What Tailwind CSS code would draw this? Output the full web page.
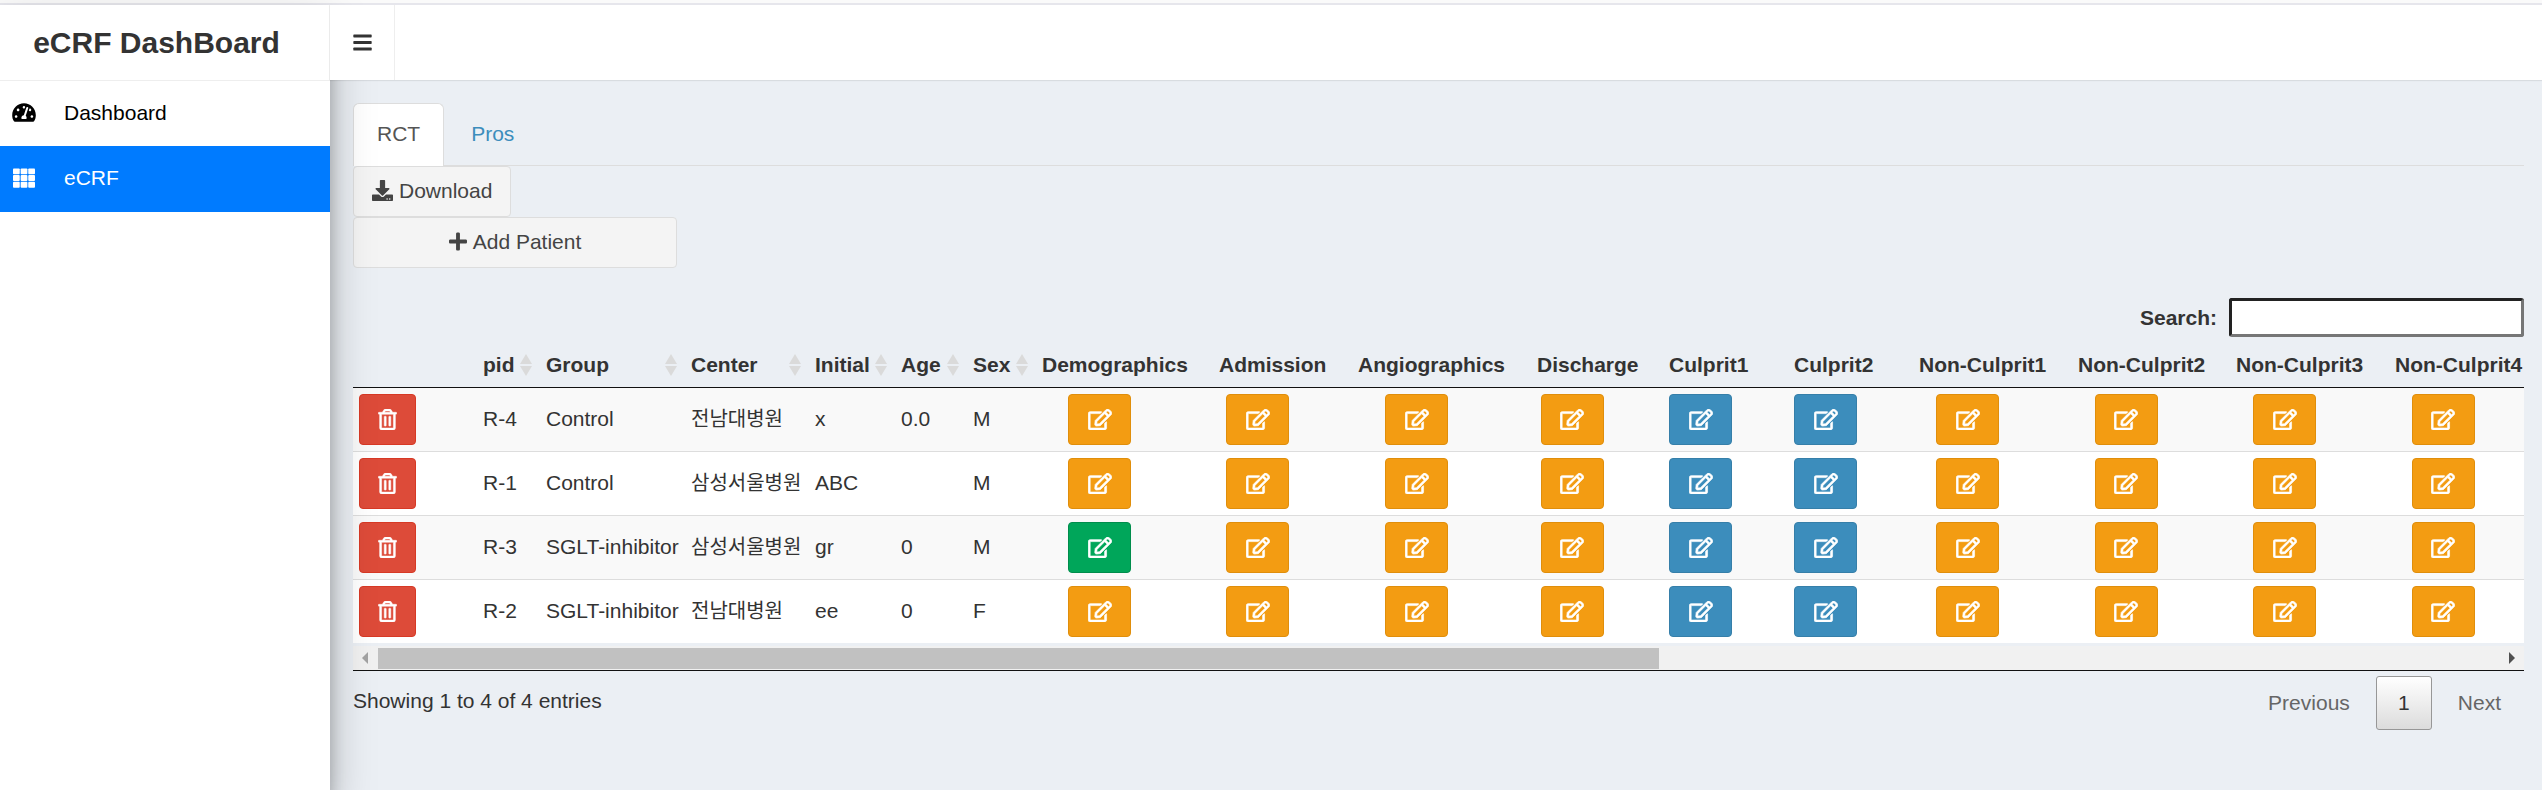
<!DOCTYPE html>
<html lang="en">
<head>
<meta charset="utf-8">
<meta name="viewport" content="width=device-width, initial-scale=1">
<title>eCRF DashBoard</title>
<script src="https://cdn.jsdelivr.net/npm/@tailwindcss/browser@4"></script>
</head>
<body class="flex min-h-screen flex-col overflow-x-hidden bg-[#ebeff4] font-['Liberation_Sans','Noto_Sans_CJK_KR',sans-serif] text-[21px] leading-[30px] text-[#333]">

<svg class="hidden" aria-hidden="true">
  <symbol id="i-gauge" viewBox="0 0 576 512"><path d="M288 32C128.94 32 0 160.94 0 320c0 52.8 14.25 102.26 39.06 144.8 5.61 9.62 16.3 15.2 27.44 15.2h443c11.14 0 21.83-5.58 27.44-15.2C561.75 422.26 576 372.8 576 320c0-159.06-128.94-288-288-288zm0 64c14.71 0 26.58 10.13 30.32 23.65-1.11 2.26-2.64 4.23-3.45 6.67l-9.22 27.67c-5.13 3.49-10.97 6.01-17.64 6.01-17.67 0-32-14.33-32-32S270.33 96 288 96zM96 384c-17.67 0-32-14.33-32-32s14.33-32 32-32 32 14.33 32 32-14.33 32-32 32zm48-160c-17.67 0-32-14.33-32-32s14.33-32 32-32 32 14.33 32 32-14.33 32-32 32zm246.77-72.41l-61.33 184C343.13 347.33 352 364.54 352 384c0 11.72-3.38 22.55-8.88 32H232.88c-5.5-9.45-8.88-20.28-8.88-32 0-33.94 26.5-61.43 59.9-63.59l61.34-184.01c4.17-12.56 17.73-19.45 30.36-15.17 12.57 4.19 19.35 17.79 15.17 30.36zm14.66 57.2l15.52-46.55c3.47-1.29 7.13-2.23 11.05-2.23 17.67 0 32 14.33 32 32s-14.33 32-32 32c-11.38-.01-20.89-6.28-26.57-15.22zM480 384c-17.67 0-32-14.33-32-32s14.33-32 32-32 32 14.33 32 32-14.33 32-32 32z"/></symbol>
  <symbol id="i-grid" viewBox="0 0 512 512"><rect x="0" y="32" width="157" height="134" rx="20"/><rect x="178" y="32" width="157" height="134" rx="20"/><rect x="355" y="32" width="157" height="134" rx="20"/><rect x="0" y="189" width="157" height="134" rx="20"/><rect x="178" y="189" width="157" height="134" rx="20"/><rect x="355" y="189" width="157" height="134" rx="20"/><rect x="0" y="346" width="157" height="134" rx="20"/><rect x="178" y="346" width="157" height="134" rx="20"/><rect x="355" y="346" width="157" height="134" rx="20"/></symbol>
  <symbol id="i-bars" viewBox="0 0 448 512"><rect y="60" width="448" height="72" rx="16"/><rect y="220" width="448" height="72" rx="16"/><rect y="380" width="448" height="72" rx="16"/></symbol>
  <symbol id="i-download" viewBox="0 0 512 512"><path d="M216 0h80c13.3 0 24 10.7 24 24v168h87.7c17.8 0 26.7 21.5 14.1 34.1L269.7 378.3c-7.5 7.5-19.8 7.5-27.3 0L90.1 226.1c-12.6-12.6-3.7-34.1 14.1-34.1H192V24c0-13.3 10.7-24 24-24zm296 376v112c0 13.3-10.7 24-24 24H24c-13.3 0-24-10.7-24-24V376c0-13.3 10.7-24 24-24h146.7l49 49c20.1 20.1 52.5 20.1 72.6 0l49-49H488c13.3 0 24 10.7 24 24zm-124 88c0-11-9-20-20-20s-20 9-20 20 9 20 20 20 20-9 20-20zm64 0c0-11-9-20-20-20s-20 9-20 20 9 20 20 20 20-9 20-20z"/></symbol>
  <symbol id="i-plus" viewBox="0 0 448 512"><path d="M416 208H272V64c0-17.67-14.33-32-32-32h-32c-17.67 0-32 14.33-32 32v144H32c-17.67 0-32 14.33-32 32v32c0 17.67 14.33 32 32 32h144v144c0 17.67 14.33 32 32 32h32c17.67 0 32-14.33 32-32V304h144c17.67 0 32-14.33 32-32v-32c0-17.67-14.33-32-32-32z"/></symbol>
  <symbol id="i-trash" viewBox="0 0 448 512"><path d="M268 416h24a12 12 0 0 0 12-12V188a12 12 0 0 0-12-12h-24a12 12 0 0 0-12 12v216a12 12 0 0 0 12 12zM432 80h-82.41l-34-56.7A48 48 0 0 0 274.41 0H173.59a48 48 0 0 0-41.16 23.3L98.41 80H16A16 16 0 0 0 0 96v16a16 16 0 0 0 16 16h16v336a48 48 0 0 0 48 48h288a48 48 0 0 0 48-48V128h16a16 16 0 0 0 16-16V96a16 16 0 0 0-16-16zM171.84 50.91A6 6 0 0 1 177 48h94a6 6 0 0 1 5.15 2.91L293.61 80H154.39zM368 464H80V128h288zm-212-48h24a12 12 0 0 0 12-12V188a12 12 0 0 0-12-12h-24a12 12 0 0 0-12 12v216a12 12 0 0 0 12 12z"/></symbol>
  <symbol id="i-edit" viewBox="0 0 576 512"><path d="M402.3 344.9l32-32c5-5 13.7-1.5 13.7 5.7V464c0 26.5-21.5 48-48 48H48c-26.5 0-48-21.5-48-48V112c0-26.5 21.5-48 48-48h273.5c7.1 0 10.7 8.6 5.7 13.7l-32 32c-1.5 1.5-3.5 2.3-5.7 2.3H48v352h352V350.5c0-2.1.8-4.1 2.3-5.6zm156.6-201.8L296.3 405.7l-90.4 10c-26.2 2.9-48.5-19.2-45.6-45.6l10-90.4L432.9 17.1c22.9-22.9 59.9-22.9 82.7 0l43.2 43.2c22.9 22.9 22.9 60 .1 82.8zM460.1 174L402 115.9 216.2 301.8l-7.3 65.3 65.3-7.3L460.1 174zm64.8-79.7l-43.2-43.2c-4.1-4.1-10.8-4.1-14.8 0L436 82l58.1 58.1 30.9-30.9c4-4.2 4-10.8-.1-14.9z"/></symbol>
  <symbol id="i-sort" viewBox="0 0 12 24"><path d="M6 1l6 10H0zM6 23l6-10H0z"/></symbol>
</svg>

<div class="h-[5px] border-b-2 border-[#e6e6ec] bg-[#fafafa]"></div>

<div class="flex grow">
  <aside class="relative z-10 flex w-[330px] shrink-0 flex-col bg-white shadow-[0_21px_42px_rgba(0,0,0,0.25),0_15px_15px_rgba(0,0,0,0.22)]">
    <a href="#" class="relative z-30 flex h-[76px] items-center justify-center border-r border-b border-[#eee] bg-white pr-4 text-[30px] font-bold">eCRF DashBoard</a>
    <nav class="flex flex-col text-black">
      <a href="#" class="flex h-[65px] items-center gap-7 pb-0.5 pl-3"><svg class="h-[21px] w-6 fill-current"><use href="#i-gauge"/></svg>Dashboard</a>
      <a href="#" aria-current="page" class="flex h-[66px] items-center gap-7 bg-[#007bff] pb-0.5 pl-3 text-white"><svg class="h-[22px] w-6 fill-current"><use href="#i-grid"/></svg>eCRF</a>
    </nav>
  </aside>

  <div class="flex min-w-0 grow flex-col">
    <header class="relative z-20 flex h-[75px] shrink-0 bg-white shadow-[0_1px_1px_rgba(0,0,0,0.08)]">
      <button type="button" aria-label="Toggle navigation" class="flex w-[65px] items-center justify-center border-r border-[#eee]"><svg class="h-[21px] w-[19px] fill-current"><use href="#i-bars"/></svg></button>
    </header>

    <main class="flex grow flex-col pt-[23px] pr-[18px] pl-[23px]">
      <div role="tablist" class="flex h-[63px] border-b border-[#ddd]">
        <button type="button" role="tab" aria-selected="true" class="-mb-px rounded-t-md border border-b-0 border-[#ddd] bg-white px-[23px] pb-0.5 text-[#555]">RCT</button>
        <button type="button" role="tab" aria-selected="false" class="px-[27px] text-[#3c8dbc]">Pros</button>
      </div>
      <div class="flex flex-col items-start text-[#444]">
        <button type="button" class="flex h-[51px] items-center gap-1.5 rounded border border-[#ddd] bg-[#f4f4f4] px-[18px] pb-0.5"><svg class="size-[21px] fill-current"><use href="#i-download"/></svg>Download</button>
        <button type="button" class="flex h-[51px] w-[324px] items-center justify-center gap-1.5 rounded border border-[#ddd] bg-[#f4f4f4] pb-0.5"><svg class="h-[21px] w-[18px] fill-current"><use href="#i-plus"/></svg>Add Patient</button>
      </div>

      <div class="mt-[30px] flex items-center justify-end gap-3">
        <label for="search" class="font-bold">Search:</label>
        <input id="search" type="search" class="h-[39px] w-[295px] rounded-[3px] border-[3px] border-t-[#222] border-r-[#767676] border-b-[#767676] border-l-[#222] bg-white px-1 outline-none">
      </div>

      <div class="mt-1 overflow-hidden">
        <table class="w-[2194px] table-fixed border-collapse">
          <colgroup>
            <col class="w-[124px]"><col class="w-[63px]"><col class="w-[145px]"><col class="w-[124px]"><col class="w-[86px]"><col class="w-[72px]"><col class="w-[69px]">
            <col class="w-[177px]"><col class="w-[139px]"><col class="w-[179px]"><col class="w-[132px]"><col class="w-[125px]"><col class="w-[125px]">
            <col class="w-[159px]"><col class="w-[158px]"><col class="w-[159px]"><col class="w-[158px]">
          </colgroup>
          <thead><tr id="head" class="h-[46px] border-b border-[#111] text-left"></tr></thead>
          <tbody id="rows"></tbody>
        </table>
      </div>

      <div class="border-b border-[#111] pt-[3px]">
        <div class="flex h-6 items-center bg-[#f1f1f1]">
          <svg class="h-3 w-[25px] shrink-0 fill-[#a3a3a3]" viewBox="0 0 25 12"><path d="M9 6l6-6v12z"/></svg>
          <div class="flex h-[21px] grow"><div class="w-[60.4%] bg-[#c1c1c1]"></div></div>
          <svg class="h-3 w-[25px] shrink-0 fill-[#505050]" viewBox="0 0 25 12"><path d="M16 6l-6-6v12z"/></svg>
        </div>
      </div>

      <div class="flex items-start justify-between pt-[5px]">
        <p class="pt-2.5">Showing 1 to 4 of 4 entries</p>
        <nav aria-label="Pages" class="flex h-[54px] items-stretch gap-[3px] text-[#666]">
          <button type="button" class="px-[23px]">Previous</button>
          <button type="button" aria-current="page" class="w-14 rounded-[3px] border border-[#979797] bg-linear-to-b from-white to-[#dcdcdc] text-[#333]">1</button>
          <button type="button" class="px-[23px]">Next</button>
        </nav>
      </div>
    </main>
  </div>
</div>

<script>
  const sortable = ['pid', 'Group', 'Center', 'Initial', 'Age', 'Sex'];
  const forms = ['Demographics', 'Admission', 'Angiographics', 'Discharge', 'Culprit1', 'Culprit2', 'Non-Culprit1', 'Non-Culprit2', 'Non-Culprit3', 'Non-Culprit4'];
  const patients = [
    ['R-4', 'Control', '전남대병원', 'x', '0.0', 'M'],
    ['R-1', 'Control', '삼성서울병원', 'ABC', '', 'M'],
    ['R-3', 'SGLT-inhibitor', '삼성서울병원', 'gr', '0', 'M'],
    ['R-2', 'SGLT-inhibitor', '전남대병원', 'ee', '0', 'F'],
  ];
  const orange = 'bg-[#f39c12] border-[#e08e0b]';
  const blue = 'bg-[#3c8dbc] border-[#367fa9]';
  const green = 'bg-[#00a65a] border-[#008d4c]';

  document.getElementById('head').innerHTML = '<td></td>' +
    sortable.map(t => `<th class="pt-0.5 pr-2 pl-1.5"><button type="button" class="flex w-full items-center justify-between font-bold">${t}<svg class="h-6 w-3 shrink-0 fill-[#dadada]"><use href="#i-sort"/></svg></button></th>`).join('') +
    forms.map(t => `<th class="pt-0.5 pl-1.5 whitespace-nowrap">${t}</th>`).join('');

  document.getElementById('rows').innerHTML = patients.map(p =>
    `<tr class="h-16 border-t border-[#ddd] bg-white first:border-t-0 odd:bg-[#f9f9f9]">
      <td class="pl-1.5"><button type="button" aria-label="Delete ${p[0]}" class="flex h-[51px] w-[57px] items-center justify-center rounded border border-[#d73925] bg-[#dd4b39]"><svg class="h-[21px] w-[19px] fill-white stroke-white stroke-[12]"><use href="#i-trash"/></svg></button></td>` +
    p.map((v, i) => `<td class="pl-1.5 whitespace-nowrap ${i === 2 ? 'text-xl' : ''}">${v}</td>`).join('') +
    forms.map((f, i) => {
      const tone = i === 4 || i === 5 ? blue : p[0] === 'R-3' && i === 0 ? green : orange;
      return `<td class="pr-14 pl-1.5"><button type="button" aria-label="Edit ${f} of ${p[0]}" class="mx-auto flex h-[51px] w-[63px] items-center justify-center rounded border ${tone}"><svg class="h-[21px] w-6 overflow-visible fill-white stroke-white stroke-[16]"><use href="#i-edit"/></svg></button></td>`;
    }).join('') + '</tr>').join('');
</script>
</body>
</html>
